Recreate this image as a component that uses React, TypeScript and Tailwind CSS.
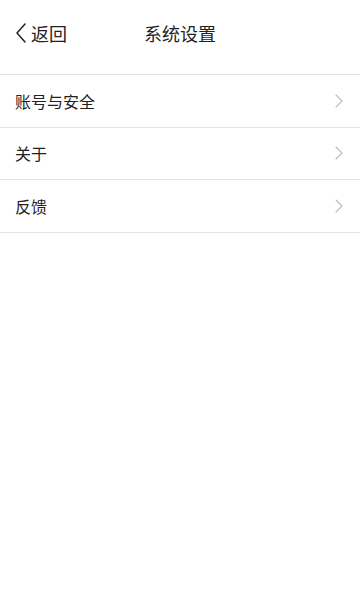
const items = ["账号与安全", "关于", "反馈"];

function ChevronLeft() {
  return (
    <svg width="14" height="22" viewBox="0 0 14 22" fill="none">
      <path d="M11 2 L3 11 L11 20" stroke="#222" strokeWidth="1.5" strokeLinecap="round" strokeLinejoin="round" />
    </svg>
  );
}

function ChevronRight() {
  return (
    <svg width="8" height="14" viewBox="0 0 8 14" fill="none">
      <path d="M1 1 L7 7 L1 13" stroke="#bbbbbb" strokeWidth="1.1" strokeLinecap="round" strokeLinejoin="round" />
    </svg>
  );
}

export default function App() {
  return (
    <div
      className="w-[360px] h-[590px] bg-white text-[#222]"
      style={{ fontFamily: '"Noto Sans CJK SC", "Noto Sans", sans-serif' }}
    >
      <header className="relative h-[75px] border-b border-[#e2e2e2] flex items-start pt-[21px] px-[14px]">
        <div className="flex items-center gap-[3px] h-[24px]">
          <ChevronLeft />
          <span className="text-[18px] leading-[24px]">返回</span>
        </div>
        <h1 className="absolute left-0 right-0 top-[21px] text-center text-[18px] leading-[24px] font-normal pointer-events-none">
          系统设置
        </h1>
      </header>
      <ul>
        {items.map((label) => (
          <li
            key={label}
            className="h-[52.5px] border-b border-[#e2e2e2] flex items-center justify-between pl-[15px] pr-[17px]"
          >
            <span className="text-[16px] leading-[22px]">{label}</span>
            <ChevronRight />
          </li>
        ))}
      </ul>
    </div>
  );
}
